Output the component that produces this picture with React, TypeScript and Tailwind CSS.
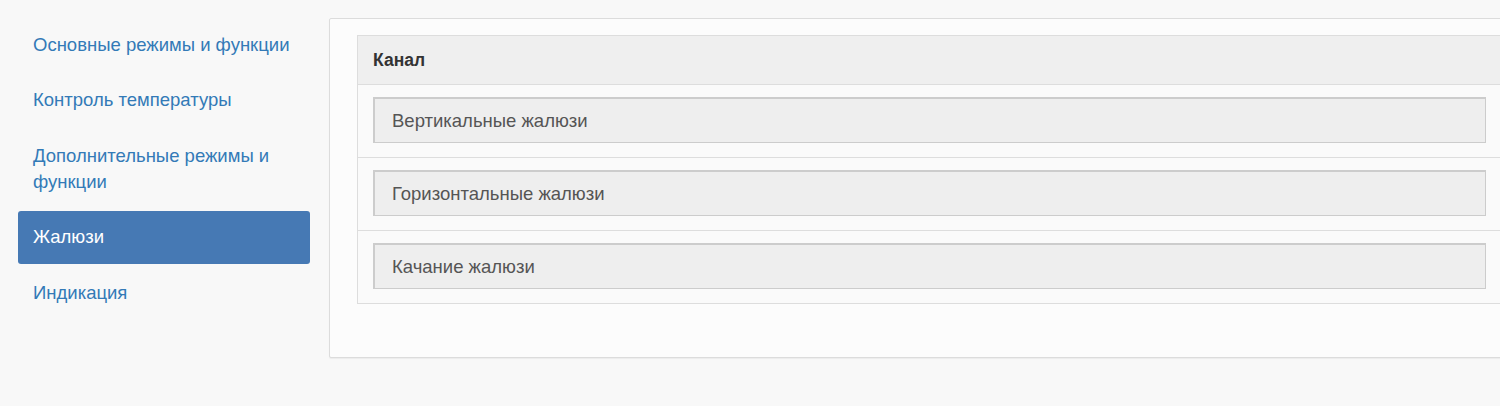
import React from "react";

const menu = [
  "Основные режимы и функции",
  "Контроль температуры",
  "Дополнительные режимы и функции",
  "Жалюзи",
  "Индикация",
];

const channels = ["Вертикальные жалюзи", "Горизонтальные жалюзи", "Качание жалюзи"];

export default function App() {
  const active = 3;

  return (
    <div
      className="w-[1500px] h-[406px] overflow-hidden bg-[#f8f8f8] flex items-start"
      style={{ fontFamily: '"Liberation Sans", Arial, sans-serif' }}
    >
      {/* Sidebar */}
      <ul className="w-[292px] ml-[18px] mt-[18px] flex flex-col gap-[2.5px] shrink-0">
        {menu.map((item, i) => (
          <li
            key={item}
            className={
              i === active
                ? "rounded-[3px] bg-[#4679b4] text-white px-[15px] py-[13.5px] text-[18.5px] leading-[26px]"
                : "rounded-[3px] text-[#337ab7] px-[15px] py-[13.5px] text-[18.5px] leading-[26px]"
            }
          >
            {item}
          </li>
        ))}
      </ul>

      {/* Panel */}
      <div className="ml-[19px] mt-[18px] w-[1200px] h-[340px] shrink-0 bg-[#fcfcfc] border border-[#dcdcdc] rounded-[2px] shadow-[0_1px_1px_rgba(0,0,0,0.05)] pl-[27px] pt-[16px]">
        <div className="w-[1180px] border border-[#dddddd] bg-[#fafafa]">
          <div className="h-[49px] bg-[#efefef] border-b border-[#dddddd] flex items-center px-[15px] text-[17.5px] font-bold text-[#333]">
            Канал
          </div>
          {channels.map((c, i) => (
            <div
              key={c}
              className={
                i < channels.length - 1
                  ? "pt-[12px] pb-[14px] px-[15px] border-b border-[#dddddd]"
                  : "pt-[12px] pb-[14px] px-[15px]"
              }
            >
              <div className="w-[1113px] h-[46px] bg-[#eeeeee] border border-[#cccccc] border-t-2 border-l-2 flex items-center pl-[17px] text-[18.5px] text-[#555555]">
                {c}
              </div>
            </div>
          ))}
        </div>
      </div>
    </div>
  );
}
